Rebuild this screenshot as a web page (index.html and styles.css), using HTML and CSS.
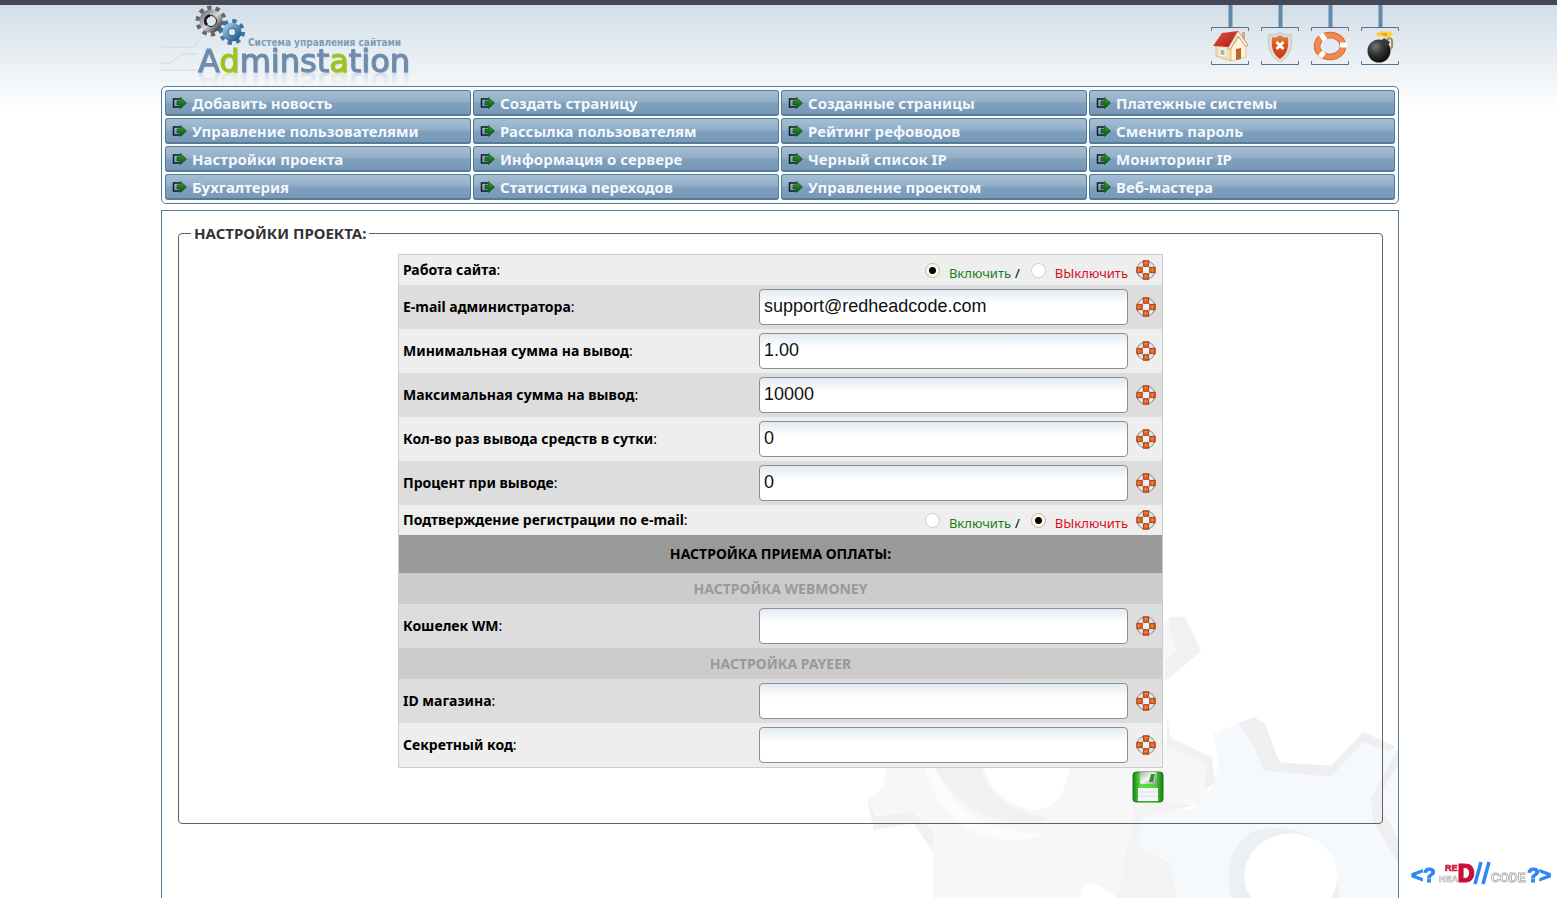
FILE: index.html
```html
<!DOCTYPE html>
<html lang="ru">
<head>
<meta charset="utf-8">
<title>Adminstation</title>
<link rel="stylesheet" href="styles.css">
</head>
<body>
<svg class="defs" aria-hidden="true">
  <defs>
    <linearGradient id="roof" x1="0" y1="0" x2="1" y2="1"><stop offset="0" stop-color="#e4573f"/><stop offset="1" stop-color="#a81a14"/></linearGradient>
    <linearGradient id="shield-fill" x1="0" y1="0" x2="0" y2="1"><stop offset="0" stop-color="#e08a50"/><stop offset=".4" stop-color="#d9531d"/><stop offset="1" stop-color="#c23c12"/></linearGradient>
    <radialGradient id="bomb-fill" cx=".35" cy=".3" r=".7"><stop offset="0" stop-color="#777"/><stop offset=".5" stop-color="#333"/><stop offset="1" stop-color="#111"/></radialGradient>
    <linearGradient id="steel" x1="0" y1="0" x2="1" y2="1"><stop offset="0" stop-color="#77777e"/><stop offset=".5" stop-color="#d5d5da"/><stop offset="1" stop-color="#3a3a40"/></linearGradient>
    <linearGradient id="blue-steel" x1="0" y1="0" x2="1" y2="1"><stop offset="0" stop-color="#9cc3df"/><stop offset="1" stop-color="#225f8e"/></linearGradient>
    <linearGradient id="disk" x1="0" y1="0" x2="1" y2="0"><stop offset="0" stop-color="#15800f"/><stop offset=".25" stop-color="#5fdd4d"/><stop offset=".75" stop-color="#4fd03b"/><stop offset="1" stop-color="#137c0d"/></linearGradient>
    <linearGradient id="shutter" x1="0" y1="0" x2="1" y2="1"><stop offset="0" stop-color="#a8b0a8"/><stop offset=".5" stop-color="#f4f6f4"/><stop offset="1" stop-color="#8d998d"/></linearGradient>
    <linearGradient id="arrow-fill" x1="0" y1="0" x2="0" y2="1"><stop offset="0" stop-color="#39a436"/><stop offset="1" stop-color="#034f04"/></linearGradient>
  </defs>
  <symbol id="arrow" viewBox="0 0 15 12">
    <path d="M8 2H1.500v8H8" fill="none" stroke="#111b22" stroke-width="1.500"/>
    <path d="M5 4h3.500V.5L14.500 6 8.500 11.500V8H5z" fill="url(#arrow-fill)" stroke="#04420a" stroke-width=".6"/>
  </symbol>
  <symbol id="help" viewBox="0 0 20 20">
    <circle cx="10" cy="10" r="7" fill="none" stroke="#888" stroke-width="5"/>
    <circle cx="10" cy="10" r="7" fill="none" stroke="#e3e3e6" stroke-width="3.400"/>
    <g fill="#dd5f22" stroke="#a63b0d" stroke-width=".9">
      <path d="M7 .8h6l-.8 5.700H7.800z"/>
      <path d="M7.800 13.500h4.400l.8 5.700H7zM.8 7l5.700.8v4.400L.8 13zM13.500 7.800L19.200 7v6l-5.700-.8z"/>
    </g>
    <circle cx="10" cy="10" r="3.300" fill="#f1edf0"/>
    <g fill="#f08b4e"><path d="M8.500 2h3v1.500h-3zM8.500 15.500h3V17h-3zM2 8.500h1.500v3H2zM15.500 8.500H17v3h-1.500z"/></g>
  </symbol>
  <symbol id="hanger" viewBox="0 0 38 60">
    <path d="M17.500 0h4v22h-4z" fill="#6189aa"/>
    <path d="M.5 26v-3.500h37V26M.5 56v3.500h37V56" fill="none" stroke="#55748c"/>
  </symbol>
</svg>

<header class="header">
  <a class="logo" href="#">
    <svg class="logo-art" viewBox="0 0 250 80" aria-hidden="true">
      <g fill="none" stroke="#cfd6dd"><path d="M0 42h34l6-10M0 65h36M10 58l10-9h16M0 58h10"/></g>
      <circle cx="50" cy="16" r="13" fill="none" stroke="#66666d" stroke-width="5" stroke-dasharray="4.200 3.970"/>
      <circle cx="50" cy="16" r="8.500" fill="none" stroke="url(#steel)" stroke-width="6"/>
      <circle cx="50" cy="16" r="5.500" fill="#dde5ec" stroke="#222"/>
      <path d="M46 20a5.500 5.500 0 0 1 3-9.500" fill="none" stroke="#18181c" stroke-width="2.500"/>
      <circle cx="71" cy="27" r="10.500" fill="none" stroke="#3c74a0" stroke-width="5" stroke-dasharray="4.100 4.140"/>
      <circle cx="71" cy="27" r="6.500" fill="none" stroke="url(#blue-steel)" stroke-width="6"/>
      <circle cx="71" cy="27" r="3.800" fill="#dfe9f1" stroke="#2b648f"/>
    </svg>
    <span class="logo-tag">Система управления сайтами</span>
    <span class="logo-name">A<b>d</b>minst<b>a</b>tion</span>
  </a>
  <nav class="tools" aria-label="Быстрые ссылки">
    <a href="#" aria-label="Главная"><svg viewBox="0 0 38 60"><use href="#hanger"/>
      <path d="M31 27h3v9h-3z" fill="#d8a77a"/>
      <path d="M5 41l6-6 9 9v12L5 51z" fill="#f4dfb0" stroke="#c9a566" stroke-width=".6"/>
      <path d="M20 43l8-11 7 9v11l-15 4z" fill="#fff3d2" stroke="#cfae70" stroke-width=".6"/>
      <path d="M2 41l9-13 16-2-9 16z" fill="url(#roof)"/>
      <path d="M17 43l10-17 10 14-2 2-8-11-8 14z" fill="#f4ece3" stroke="#c0715a" stroke-width=".7"/>
      <path d="M25 44l5-1v11l-5 1z" fill="#b9682a"/><path d="M9 44l5 1v6l-5-1z" fill="#9eb4c2" stroke="#fff"/></svg></a>
    <a href="#" aria-label="Защита"><svg viewBox="0 0 38 60"><use href="#hanger"/>
      <path d="M19 27c4 3 7 3 11 2 2 14-1 23-11 28C9 52 6 43 8 29c4 1 7 1 11-2z" fill="#dedbd8" stroke="#bdb9b7" stroke-width=".7"/>
      <path d="M19 30c3 2 5 3 8 2 1 11-1 17-8 22-7-5-9-11-8-22 3 1 5 0 8-2z" fill="url(#shield-fill)"/>
      <path d="M15.500 37l7 7m0-7l-7 7" stroke="#fff" stroke-width="3"/></svg></a>
    <a href="#" aria-label="Помощь"><svg viewBox="0 0 38 60"><use href="#hanger"/>
      <g fill="none"><ellipse cx="19" cy="41" rx="13" ry="11" stroke="#c95e2b" stroke-width="6.500"/><ellipse cx="19" cy="41" rx="13" ry="11" stroke="#ef8b52" stroke-width="5"/></g>
      <path d="M10 29l4 6M29 40h7M9 52l4-5" stroke="#fff" stroke-width="5"/></svg></a>
    <a href="#" aria-label="Выход"><svg viewBox="0 0 38 60"><use href="#hanger"/>
      <path d="M26 36c1-4 5-3 5 0s1 5-1 8" fill="none" stroke="#a78b5a" stroke-width="2"/>
      <circle cx="18" cy="46" r="11.500" fill="url(#bomb-fill)"/><path d="M23 33l6 4-3 5-7-5z" fill="#3a3a3a"/>
      <path d="M15 28l6-2 9 1 2 3-6 3-5-2-4 1z" fill="#ffcf43"/><path d="M20 28h6v3l-5-1z" fill="#f09a2a"/></svg></a>
  </nav>
</header>

<nav class="menu" aria-label="Меню">
  <a href="#"><svg><use href="#arrow"/></svg>Добавить новость</a>
  <a href="#"><svg><use href="#arrow"/></svg>Создать страницу</a>
  <a href="#"><svg><use href="#arrow"/></svg>Созданные страницы</a>
  <a href="#"><svg><use href="#arrow"/></svg>Платежные системы</a>
  <a href="#"><svg><use href="#arrow"/></svg>Управление пользователями</a>
  <a href="#"><svg><use href="#arrow"/></svg>Рассылка пользователям</a>
  <a href="#"><svg><use href="#arrow"/></svg>Рейтинг рефоводов</a>
  <a href="#"><svg><use href="#arrow"/></svg>Сменить пароль</a>
  <a href="#"><svg><use href="#arrow"/></svg>Настройки проекта</a>
  <a href="#"><svg><use href="#arrow"/></svg>Информация о сервере</a>
  <a href="#"><svg><use href="#arrow"/></svg>Черный список IP</a>
  <a href="#"><svg><use href="#arrow"/></svg>Мониторинг IP</a>
  <a href="#"><svg><use href="#arrow"/></svg>Бухгалтерия</a>
  <a href="#"><svg><use href="#arrow"/></svg>Статистика переходов</a>
  <a href="#"><svg><use href="#arrow"/></svg>Управление проектом</a>
  <a href="#"><svg><use href="#arrow"/></svg>Веб-мастера</a>
</nav>

<main class="main">
  <svg class="gears" viewBox="0 0 1507 894" preserveAspectRatio="none" aria-hidden="true">
    <path d="M865 52l45-2 45 102-50 50-50 40-60 40v50l65 95 120 45 10 70-40 70-80-5-40 80 10 100 40 40-20 20-70 67H740q-50-60-110-64l-20 64H400l-45-20-15 20H205V760l-50-90-115 20-20-90 45-35 10-70V400L500 150l300-20z" fill="#f7f7f7"/>
    <path d="M865 50h45l45 102-55 50-45 40v-60l35-30-25-60z" fill="#f1f1f1"/>
    <path d="M860 345l10 70 115 55 10 80-30 20 5-80-110-50zM20 600l25 50 100-15 60 60v60l-55-85-110 20z" fill="#f1f1f1"/>
    <path d="M180 500q60 215 250 220 60 0 90-20-190 0-260-110-40-50-50-90z" fill="#fcfcfc"/>
    <path d="M205 500q80 150 240 172 60 0 80-20-150-20-190-152z" fill="#f1f1f1"/>
    <path d="M345 500q30 110 150 132 80-20 92-132z" fill="#fff"/>
    <path d="M990 400l110-48 35 20 40 115 145 15 90-102 90 50 7 20v424H880l-20-114-85-50 5-110 150 8 60-70 15-70z" fill="#f5f9fc"/>
    <path d="M1060 368l45-16 30 20 40 115 145 10 90-102 90 45-20 15-70-30-90 105-190-18-30-80z" fill="#efeff1"/>
    <path d="M1507 445l-75 150 5 70 70 120v-70l-45-90 5-60 40-70z" fill="#efeff1"/>
    <path d="M720 894l50-270 60-20 110 10-150 40-10 90 90 45 15 105z" fill="#f3f3f4"/>
    <path d="M1040 894q-30-140 60-200 150-40 220 80 25 50 20 120z" fill="#edf0f3"/>
    <ellipse cx="1207" cy="828" rx="130" ry="128" fill="#fff"/>
  </svg>
  <form class="settings">
    <fieldset>
      <legend>НАСТРОЙКИ ПРОЕКТА:</legend>
      <table class="grid">
        <tbody>
          <tr class="light compact"><th>Работа сайта<i>:</i></th><td class="radios"><input type="radio" name="site" id="site-on" checked><label class="on" for="site-on">Включить</label><span>/</span><input type="radio" name="site" id="site-off"><label class="off" for="site-off">ВЫключить</label></td><td class="hint"><svg><use href="#help"/></svg></td></tr>
          <tr class="dark"><th><label for="mail">E-mail администратора</label><i>:</i></th><td><input class="field" id="mail" type="text" value="support@redheadcode.com"></td><td class="hint"><svg><use href="#help"/></svg></td></tr>
          <tr class="light"><th><label for="min">Минимальная сумма на вывод</label><i>:</i></th><td><input class="field" id="min" type="text" value="1.00"></td><td class="hint"><svg><use href="#help"/></svg></td></tr>
          <tr class="dark"><th><label for="max">Максимальная сумма на вывод</label><i>:</i></th><td><input class="field" id="max" type="text" value="10000"></td><td class="hint"><svg><use href="#help"/></svg></td></tr>
          <tr class="light"><th><label for="count">Кол-во раз вывода средств в сутки</label><i>:</i></th><td><input class="field" id="count" type="text" value="0"></td><td class="hint"><svg><use href="#help"/></svg></td></tr>
          <tr class="dark"><th><label for="percent">Процент при выводе</label><i>:</i></th><td><input class="field" id="percent" type="text" value="0"></td><td class="hint"><svg><use href="#help"/></svg></td></tr>
          <tr class="light compact"><th>Подтверждение регистрации по e-mail<i>:</i></th><td class="radios"><input type="radio" name="confirm" id="confirm-on"><label class="on" for="confirm-on">Включить</label><span>/</span><input type="radio" name="confirm" id="confirm-off" checked><label class="off" for="confirm-off">ВЫключить</label></td><td class="hint"><svg><use href="#help"/></svg></td></tr>
          <tr class="title"><th colspan="3">НАСТРОЙКА ПРИЕМА ОПЛАТЫ:</th></tr>
          <tr class="subtitle"><th colspan="3">НАСТРОЙКА WEBMONEY</th></tr>
          <tr class="dark"><th><label for="wm">Кошелек WM</label><i>:</i></th><td><input class="field" id="wm" type="text"></td><td class="hint"><svg><use href="#help"/></svg></td></tr>
          <tr class="subtitle"><th colspan="3">НАСТРОЙКА PAYEER</th></tr>
          <tr class="dark"><th><label for="shop">ID магазина</label><i>:</i></th><td><input class="field" id="shop" type="text"></td><td class="hint"><svg><use href="#help"/></svg></td></tr>
          <tr class="light"><th><label for="secret">Секретный код</label><i>:</i></th><td><input class="field" id="secret" type="text"></td><td class="hint"><svg><use href="#help"/></svg></td></tr>
        </tbody>
      </table>
      <div class="actions">
        <button class="save" type="submit" aria-label="Сохранить"><svg viewBox="0 0 32 32">
          <rect x="1" y="1" width="30" height="30" rx="3" fill="url(#disk)" stroke="#188312"/>
          <path d="M8 1h17v10q0 2-2 2H10q-2 0-2-2z" fill="url(#shutter)"/><path d="M19 3h4l-2 8h-4z" fill="#2f9427"/><path d="M24 1v10" stroke="#777f77"/>
          <path d="M6 17h20v13H6z" fill="#f4f7fa"/><path d="M6 21h20M6 25h20" stroke="#d4deea"/></svg></button>
      </div>
    </fieldset>
  </form>
</main>

<a class="badge" href="#" aria-label="RedHead Code"><svg viewBox="0 0 144 32">
  <g font-family="Liberation Sans, sans-serif" font-weight="700">
    <g font-size="21" fill="#2f87f5" stroke="#2f87f5"><text x="0" y="24">&lt;</text><text x="12" y="24">?</text><text x="116" y="24">?</text><text x="128" y="24">&gt;</text></g>
    <text x="28" y="24" font-size="9" fill="#fff" stroke="#b5b5b5" stroke-width=".7">HEA</text>
    <text x="34" y="13" font-size="9" fill="#cf1739" stroke="#cf1739" stroke-width=".6">RE</text>
    <text x="46" y="24" font-family="DejaVu Sans Condensed, sans-serif" font-size="24" fill="#c90f37" stroke="#c90f37">D</text>
    <path d="M64 26L70 4M72 26L78 4" stroke="#2f87f5" stroke-width="3.500"/>
    <text x="80" y="24" font-size="12" fill="#fff" stroke="#a9a9a9" stroke-width=".8">CODE</text>
  </g></svg></a>
</body>
</html>
```

FILE: styles.css
```css
* { box-sizing: border-box; }

body {
  display: flex;
  flex-direction: column;
  min-height: 100vh;
  margin: 0;
  padding: 0 158px 0 161px;
  border-top: 5px solid #464755;
  background: #fff linear-gradient(#d0dce7, #fff 110px) no-repeat;
  font: 13px/18px "Noto Sans", "Open Sans", sans-serif;
  color: #000;
}

a { color: inherit; text-decoration: none; }
.defs { position: absolute; width: 0; height: 0; }

.header {
  display: flex;
  justify-content: space-between;
  align-items: flex-start;
  height: 81px;
}

.logo { position: relative; width: 250px; height: 80px; }
.logo-art { display: block; width: 250px; height: 80px; }
.logo-tag {
  position: absolute;
  left: 87px;
  top: 32px;
  font: bold 10px/12px "DejaVu Sans Condensed", "DejaVu Sans", sans-serif;
  color: #7f9dbb;
  white-space: nowrap;
}
.logo-name {
  position: absolute;
  left: 37px;
  top: 44px;
  font: 32px/24px "DejaVu Sans", sans-serif;
  color: #6d8cab;
  -webkit-text-stroke: 1px currentColor;
  text-shadow: 1px 1px 1px #a9bac9;
  -webkit-box-reflect: below -1px linear-gradient(transparent 40%, rgba(0, 0, 0, .2));
}
.logo-name b { font-weight: 400; color: #9dc41c; }

.tools { display: flex; gap: 12px; }
.tools svg { display: block; width: 38px; height: 60px; }

.menu {
  display: grid;
  grid-template-columns: repeat(4, 1fr);
  gap: 2px;
  padding: 3px;
  border: 1px solid #567b94;
  border-radius: 5px;
  background: #fafdff;
}
.menu a {
  display: flex;
  align-items: center;
  gap: 5px;
  height: 26px;
  padding-left: 6px;
  border: 1px solid #567b94;
  border-bottom-width: 2px;
  border-radius: 3px;
  background: linear-gradient(#a6bed4, #93afc8 45%, #7f9fbc 55%, #7799b8);
  font: bold 15px/20px "Noto Sans", sans-serif;
  color: #f2f8fd;
}
.menu svg { width: 15px; height: 12px; }

.main {
  position: relative;
  flex: 1;
  margin-top: 6px;
  padding: 12px 15px 74px 16px;
  border: 1px solid #567b94;
  border-bottom: 0;
  overflow: hidden;
}
.gears { position: absolute; right: 0; bottom: 0; width: 538px; height: 298px; }

.settings { position: relative; }
.settings fieldset {
  min-width: 0;
  margin: 0;
  padding: 11px 12px 20px;
  border: 1px solid #5d6266;
  border-radius: 4px;
}
.settings legend {
  padding: 0 3px;
  font: bold 15px/20px "Noto Sans", sans-serif;
  color: #333;
}

.grid {
  width: 765px;
  max-width: 100%;
  margin: 0 auto;
  border: 1px solid #ccc;
  border-spacing: 0;
}
.grid th, .grid td { height: 44px; padding: 0 4px; }
.grid th { text-align: left; font-size: 14px; }
.grid i { font-style: normal; font-weight: 400; }
.grid td:nth-child(2) { width: 377px; }
.grid .hint { width: 30px; }
.hint svg { display: block; width: 20px; height: 20px; }
.grid .compact > * { height: 30px; }
.light { background: #eee; }
.dark { background: #ddd; }
.title { background: #999; }
.subtitle { background: #ccc; color: #999; }
.grid .title th { height: 38px; text-align: center; }
.grid .subtitle th { height: 31px; text-align: center; }

.grid .radios { padding-top: 4px; text-align: right; white-space: nowrap; }
.radios span { margin: 0 8px 0 4px; }
.radios input {
  appearance: none;
  width: 15px;
  height: 15px;
  margin: 0 9px 0 3px;
  border: 1px solid #ccc;
  border-radius: 50%;
  background: #fff;
}
.radios input:checked {
  border-color: #c9b98d;
  background: radial-gradient(circle, #000 3px, #f9f7ef 4px);
}
.on { color: #15801b; }
.off { color: #d90f1b; }

.field {
  display: block;
  width: 100%;
  height: 36px;
  padding: 0 4px 2px;
  border: 1px solid #8a8f93;
  border-radius: 4px;
  background: linear-gradient(#e2ebf2, #fff 14px);
  font: 18px/22px "Liberation Sans", Arial, sans-serif;
  color: #111;
}

.actions { display: flex; justify-content: flex-end; width: 767px; max-width: 100%; margin: 3px auto 0; }
.save { padding: 0; border: 0; background: none; }
.save svg { display: block; width: 32px; height: 32px; }

.badge { position: fixed; right: 2px; bottom: 8px; }
.badge svg { display: block; width: 144px; height: 32px; }
```
